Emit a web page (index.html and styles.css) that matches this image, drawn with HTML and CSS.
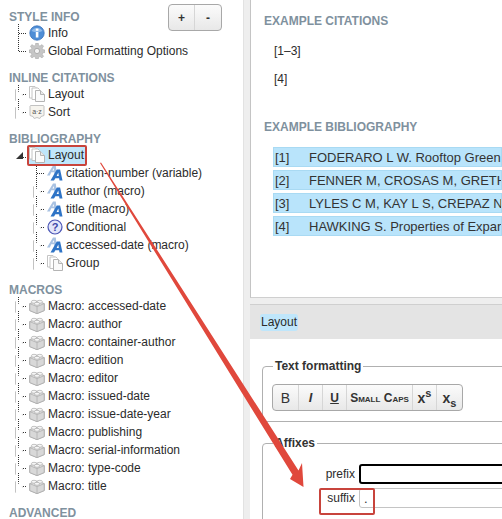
FILE: index.html
```html
<!DOCTYPE html>
<html lang="en">
<head>
<meta charset="utf-8">
<title>Style editor</title>
<link rel="stylesheet" href="styles.css">
</head>
<body>
<svg class="defs" width="0" height="0">
  <symbol id="i-info" viewBox="0 0 16 16">
    <circle cx="8" cy="8" r="7.200" fill="#4f8ed6" stroke="#3a73bb" stroke-width=".8"/>
    <path d="M2.500 6a6 5 0 0 1 11 0a8 4 0 0 1-11 0z" fill="#a9cdf2" opacity=".7"/>
    <rect x="6.800" y="7" width="2.600" height="5.500" fill="#fff"/>
    <rect x="6.800" y="3.600" width="2.600" height="2.200" fill="#fff"/>
  </symbol>
  <symbol id="i-gear" viewBox="0 0 16 16">
    <path d="M6.800 0h2.400l.4 2.400 1.400.6 2-1.400 1.600 1.600-1.400 2 .6 1.400 2.200.5v2.400l-2.200.4-.6 1.400 1.400 2-1.600 1.600-2-1.400-1.400.6-.4 2.200H6.800l-.4-2.200-1.400-.6-2 1.400-1.600-1.600 1.400-2-.6-1.400L0 9.500V7.100l2.200-.5.6-1.400-1.400-2L3 1.600l2 1.400 1.400-.6z" fill="#c6c6c6" stroke="#a4a4a4" stroke-width=".5"/>
    <circle cx="8" cy="8" r="2.600" fill="#f4f4f4" stroke="#999" stroke-width=".7"/>
  </symbol>
  <symbol id="i-pages" viewBox="0 0 16 16">
    <path d="M.5.500h5.500l1.500 1.500v10h-7z" fill="#fff" stroke="#c4c4c4"/>
    <path d="M3 2h6l1.500 1.500v10H3z" fill="#fff" stroke="#c4c4c4"/>
    <path d="M6.500 4.500h5l4 4v7h-9z" fill="#fafafa" stroke="#b4b4b4"/>
    <path d="M11.500 4.500v4h4" fill="#eaeaea" stroke="#b4b4b4"/>
  </symbol>
  <symbol id="i-sort" viewBox="0 0 16 16">
    <path d="M1.500 1.500h13l.5.500v9.500l-3 1-1.200 2-2.800-1-2.800 1-1.200-2-3-1V2z" fill="#f6f4ee" stroke="#c2c2c2"/>
    <text x="8" y="10" class="sort-text">a·z</text>
  </symbol>
  <symbol id="i-cube" viewBox="0 0 16 16">
    <path d="M8 3l7.200 2.600v7L8 15.600.8 12.600v-7z" fill="#e4e4e4" stroke="#a9a9a9" stroke-width=".9"/>
    <path d="M.8 5.600L8 8.600l7.200-3v7L8 15.600.8 12.600z" fill="#d8d8d8" stroke="#a9a9a9" stroke-width=".7"/>
    <path d="M8 8.600v7" stroke="#b0b0b0" stroke-width=".8" fill="none"/>
    <ellipse cx="5" cy="3.800" rx="2.700" ry="1.500" fill="#f6f6f6" stroke="#adadad" stroke-width=".7"/>
    <ellipse cx="10.800" cy="3.800" rx="2.700" ry="1.500" fill="#f6f6f6" stroke="#adadad" stroke-width=".7"/>
    <ellipse cx="8" cy="5.800" rx="2.700" ry="1.500" fill="#f6f6f6" stroke="#adadad" stroke-width=".7"/>
  </symbol>
  <symbol id="i-aa" viewBox="0 0 16 16">
    <path d="M0 10.500L6 .5h2.800l1 8.500H7.300l-.2-1.700H4.300L2.800 10.500z M5.400 5.600h1.600L6.700 2.900z" fill="#a9c2e2" fill-rule="evenodd"/>
    <path d="M3.500 15.500L9.800 4.500h3.300L15.500 15.500h-3l-.4-2.300H8.400L7 15.500z M9.600 11h2.200l-.5-3.400z" fill="#2f74c6" fill-rule="evenodd"/>
  </symbol>
  <symbol id="i-q" viewBox="0 0 16 16">
    <circle cx="8" cy="8" r="7" fill="#e3e6fa" stroke="#4a55b5" stroke-width="1.200"/>
    <text x="8" y="12" class="q-text">?</text>
  </symbol>
</svg>

<div class="app">
  <aside class="sidebar">
    <div class="zoom-buttons btn-group">
      <button class="btn btn-plain" type="button">+</button>
      <button class="btn btn-plain" type="button">-</button>
    </div>

    <section class="group group-first">
      <h3 class="group-title">STYLE INFO</h3>
      <ul class="tree">
        <li class="node"><span class="twig"></span><svg class="ico"><use href="#i-info"/></svg><span>Info</span></li>
        <li class="node node-last"><span class="twig"></span><svg class="ico"><use href="#i-gear"/></svg><span>Global Formatting Options</span></li>
      </ul>
    </section>

    <section class="group">
      <h3 class="group-title">INLINE CITATIONS</h3>
      <ul class="tree">
        <li class="node closed"><span class="twig"></span><svg class="ico"><use href="#i-pages"/></svg><span>Layout</span></li>
        <li class="node closed node-last"><span class="twig"></span><svg class="ico"><use href="#i-sort"/></svg><span>Sort</span></li>
      </ul>
    </section>

    <section class="group">
      <h3 class="group-title">BIBLIOGRAPHY</h3>
      <ul class="tree">
        <li class="node opened node-last"><span class="twig"></span><span class="selected"><svg class="ico"><use href="#i-pages"/></svg><span>Layout</span></span></li>
      </ul>
      <ul class="tree tree-sub">
        <li class="node"><span class="twig"></span><svg class="ico"><use href="#i-aa"/></svg><span>citation-number (variable)</span></li>
        <li class="node closed"><span class="twig"></span><svg class="ico"><use href="#i-aa"/></svg><span>author (macro)</span></li>
        <li class="node closed"><span class="twig"></span><svg class="ico"><use href="#i-aa"/></svg><span>title (macro)</span></li>
        <li class="node closed"><span class="twig"></span><svg class="ico"><use href="#i-q"/></svg><span>Conditional</span></li>
        <li class="node closed"><span class="twig"></span><svg class="ico"><use href="#i-aa"/></svg><span>accessed-date (macro)</span></li>
        <li class="node closed node-last"><span class="twig"></span><svg class="ico"><use href="#i-pages"/></svg><span>Group</span></li>
      </ul>
    </section>

    <section class="group">
      <h3 class="group-title">MACROS</h3>
      <ul class="tree">
        <li class="node closed"><span class="twig"></span><svg class="ico"><use href="#i-cube"/></svg><span>Macro: accessed-date</span></li>
        <li class="node closed"><span class="twig"></span><svg class="ico"><use href="#i-cube"/></svg><span>Macro: author</span></li>
        <li class="node closed"><span class="twig"></span><svg class="ico"><use href="#i-cube"/></svg><span>Macro: container-author</span></li>
        <li class="node closed"><span class="twig"></span><svg class="ico"><use href="#i-cube"/></svg><span>Macro: edition</span></li>
        <li class="node closed"><span class="twig"></span><svg class="ico"><use href="#i-cube"/></svg><span>Macro: editor</span></li>
        <li class="node closed"><span class="twig"></span><svg class="ico"><use href="#i-cube"/></svg><span>Macro: issued-date</span></li>
        <li class="node closed"><span class="twig"></span><svg class="ico"><use href="#i-cube"/></svg><span>Macro: issue-date-year</span></li>
        <li class="node closed"><span class="twig"></span><svg class="ico"><use href="#i-cube"/></svg><span>Macro: publishing</span></li>
        <li class="node closed"><span class="twig"></span><svg class="ico"><use href="#i-cube"/></svg><span>Macro: serial-information</span></li>
        <li class="node closed"><span class="twig"></span><svg class="ico"><use href="#i-cube"/></svg><span>Macro: type-code</span></li>
        <li class="node closed node-last"><span class="twig"></span><svg class="ico"><use href="#i-cube"/></svg><span>Macro: title</span></li>
      </ul>
    </section>

    <section class="group">
      <h3 class="group-title">ADVANCED</h3>
    </section>
  </aside>

  <div class="splitter"></div>

  <main class="content">
    <div class="preview">
      <h3 class="pane-title">EXAMPLE CITATIONS</h3>
      <p class="citation">[1–3]</p>
      <p class="citation">[4]</p>
      <h3 class="pane-title pane-title-bib">EXAMPLE BIBLIOGRAPHY</h3>
      <div class="bib">
        <div class="bib-row"><span class="bib-num">[1]</span><span>FODERARO L W. Rooftop Green</span></div>
        <div class="bib-row"><span class="bib-num">[2]</span><span>FENNER M, CROSAS M, GRETH</span></div>
        <div class="bib-row"><span class="bib-num">[3]</span><span>LYLES C M, KAY L S, CREPAZ N</span></div>
        <div class="bib-row"><span class="bib-num">[4]</span><span>HAWKING S. Properties of Expar</span></div>
      </div>
    </div>

    <div class="editor">
      <div class="editor-head"><span class="crumb">Layout</span></div>
      <fieldset class="fs fs-format">
        <legend class="fs-legend">Text formatting</legend>
        <div class="btn-group">
          <button class="btn btn-b" type="button">B</button>
          <button class="btn btn-i" type="button">I</button>
          <button class="btn btn-u" type="button">U</button>
          <button class="btn btn-sc" type="button">Small Caps</button>
          <button class="btn btn-sup" type="button">x<sup>s</sup></button>
          <button class="btn btn-sub" type="button">x<sub>s</sub></button>
        </div>
      </fieldset>
      <fieldset class="fs fs-affix">
        <legend class="fs-legend">Affixes</legend>
        <div class="field"><label class="field-label">prefix</label><input class="input input-focus" type="text"></div>
        <div class="field"><label class="field-label">suffix</label><input class="input" type="text" value="."></div>
      </fieldset>
    </div>
  </main>
</div>

<div class="mark mark-layout"></div>
<div class="mark mark-suffix"></div>
<svg class="arrow" width="502" height="519" viewBox="0 0 502 519">
  <path d="M100 163L101 162.400L298.500 470.500L302 463L303.500 487L290 479L292.500 474.800Z" fill="#e0483c"/>
</svg>
</body>
</html>
```
FILE: styles.css
```css
* { box-sizing: border-box; }
html, body { margin: 0; height: 100%; }
body {
  overflow: hidden;
  font-family: "Liberation Sans", Arial, sans-serif;
  font-size: 12px;
  color: #2b2b2b;
  background: #fff;
}
.defs { display: block; height: 0; }
.sort-text { font: 7px "Liberation Sans", sans-serif; text-anchor: middle; fill: #555; }
.q-text { font: bold 11px "Liberation Sans", sans-serif; text-anchor: middle; fill: #3c46a8; }

.app { display: flex; height: 519px; overflow: hidden; }

/* Sidebar */
.sidebar { position: relative; width: 243px; flex: none; padding: 11px 0 0 9px; }
.zoom-buttons { position: absolute; top: 4px; left: 168px; height: 28px; }
.group { margin-top: 12px; }
.group-first { margin-top: 0; }
.group-title {
  margin: 0;
  height: 13px;
  line-height: 13px;
  font-size: 12px;
  font-weight: bold;
  color: #7f919e;
}
.tree { list-style: none; margin: 0; padding: 0 0 0 5px; }
.tree-sub { padding-left: 23px; }
.node { display: flex; align-items: center; height: 18px; white-space: nowrap; }
.twig {
  position: relative;
  flex: none;
  width: 14px;
  height: 18px;
  margin-right: 1px;
  background:
    repeating-linear-gradient(to bottom, #333 0 1px, transparent 1px 2px) 4px 0 / 1px 100% no-repeat,
    repeating-linear-gradient(to right, #333 0 1px, transparent 1px 2px) 5px 9px / 7px 1px no-repeat;
}
.node-last .twig {
  background:
    repeating-linear-gradient(to bottom, #333 0 1px, transparent 1px 2px) 4px 0 / 1px 9px no-repeat,
    repeating-linear-gradient(to right, #333 0 1px, transparent 1px 2px) 5px 9px / 7px 1px no-repeat;
}
.closed .twig::before {
  content: "";
  position: absolute;
  left: 1px;
  top: 4px;
  width: 6px;
  height: 10px;
  background: #fff;
  border: 1px solid #c3c3c3;
  clip-path: polygon(0 0, 100% 50%, 0 100%);
}
.opened .twig {
  background: repeating-linear-gradient(to right, #333 0 1px, transparent 1px 2px) 9px 11px / 3px 1px no-repeat;
}
.opened .twig::before {
  content: "";
  position: absolute;
  left: 2px;
  top: 6px;
  width: 7px;
  height: 7px;
  background: #333;
  clip-path: polygon(100% 0, 100% 100%, 0 100%);
}
.ico { flex: none; width: 16px; height: 16px; margin-right: 3px; }
.selected {
  display: flex;
  align-items: center;
  height: 18px;
  margin-left: -2px;
  padding: 0 2px;
  background: #bfe6fb;
}

/* Buttons */
.btn-group {
  display: inline-flex;
  height: 27px;
  border: 1px solid #a8a8a8;
  border-radius: 4px;
  overflow: hidden;
  background: linear-gradient(#fbfbfb, #e8e8e8);
}
.btn {
  border: 0;
  border-right: 1px solid #d6d6d6;
  padding: 0;
  background: none;
  height: 100%;
  font-family: "Liberation Sans", sans-serif;
  font-size: 13px;
  color: #333;
}
.btn:last-child { border-right: 0; }
.btn-plain { width: 26px; font-weight: bold; font-size: 12px; }
.btn-b { width: 26px; font-size: 14px; }
.btn-i { width: 24px; font-style: italic; font-weight: bold; }
.btn-u { width: 24px; text-decoration: underline; font-weight: bold; font-size: 12px; }
.btn-sc { width: 66px; font-variant: small-caps; font-weight: bold; font-size: 12px; }
.btn-sup { width: 24px; font-weight: bold; font-size: 14px; }
.btn-sub { width: 25px; font-weight: bold; font-size: 14px; }
.btn sup, .btn sub { font-size: 11px; line-height: 0; }

/* Splitter */
.splitter { flex: none; width: 7px; background: #eeeeee; border-left: 1px solid #e2e2e2; }

/* Right side */
.content { flex: 1; min-width: 0; display: flex; flex-direction: column; overflow: hidden; background: #eeeeee; }
.preview { height: 298px; flex: none; padding: 15px 0 0 13px; background: #fff; border-left: 1px solid #c4c4c4; border-bottom: 1px solid #cfcfcf; }
.pane-title { margin: 0; height: 13px; line-height: 13px; font-size: 12px; font-weight: bold; color: #7f919e; }
.pane-title-bib { margin-top: 34px; }
.citation { margin: 16px 0 0 10px; height: 15px; line-height: 15px; font-size: 12px; }
.citation + .citation { margin-top: 13px; }
.bib { margin: 13px 0 0 9px; display: flex; flex-direction: column; gap: 3px; }
.bib-row {
  display: flex;
  height: 20px;
  line-height: 19px;
  font-size: 13px;
  white-space: nowrap;
  overflow: hidden;
  background: #b9e4fb;
  border: 1px solid #a9daf3;
  color: #333;
}
.bib-num { flex: none; width: 35px; padding-left: 1px; }

.editor { flex: 1; margin-top: 6px; border-top: 1px solid #cfcfcf; background: #fff; }
.editor-head { height: 34px; padding: 9px 0 0 10px; background: #e4e4e4; }
.crumb {
  display: inline-block;
  height: 17px;
  line-height: 17px;
  padding: 0 1px;
  border-radius: 3px;
  background: #bfe6fb;
  font-size: 12px;
}
.fs {
  margin: 0 -10px 0 12px;
  min-width: 0;
  border: 1px solid #b0b0b0;
  border-radius: 4px 0 0 4px;
  padding: 0;
}
.fs-format { margin-top: 20px; height: 63px; padding: 10px 0 0 0; }
.fs-affix { margin-top: 14px; height: 100px; padding: 11px 0 0 0; }
.fs-format .btn-group { margin-left: 9px; }
.fs-legend { margin-left: 10px; padding: 0 2px; font-size: 12px; font-weight: bold; line-height: 15px; color: #333; }
.field { display: flex; align-items: center; height: 24px; }
.field-label { flex: none; width: 96px; padding-right: 4px; text-align: right; font-size: 12px; }
.input {
  flex: 1;
  min-width: 0;
  height: 20px;
  border: 1px solid #c4c4c4;
  border-radius: 3px 0 0 3px;
  padding: 0 4px;
  font: 13px "Liberation Sans", sans-serif;
  color: #333;
  outline: 0;
}
.input-focus { border: 2px solid #000; }

/* Annotation overlay */
.mark { position: absolute; border: 2px solid #c8443c; border-radius: 2px; }
.mark-layout { left: 27px; top: 145px; width: 60px; height: 21px; }
.mark-suffix { left: 319px; top: 488px; width: 56px; height: 27px; }
.arrow { position: absolute; left: 0; top: 0; pointer-events: none; }
```
